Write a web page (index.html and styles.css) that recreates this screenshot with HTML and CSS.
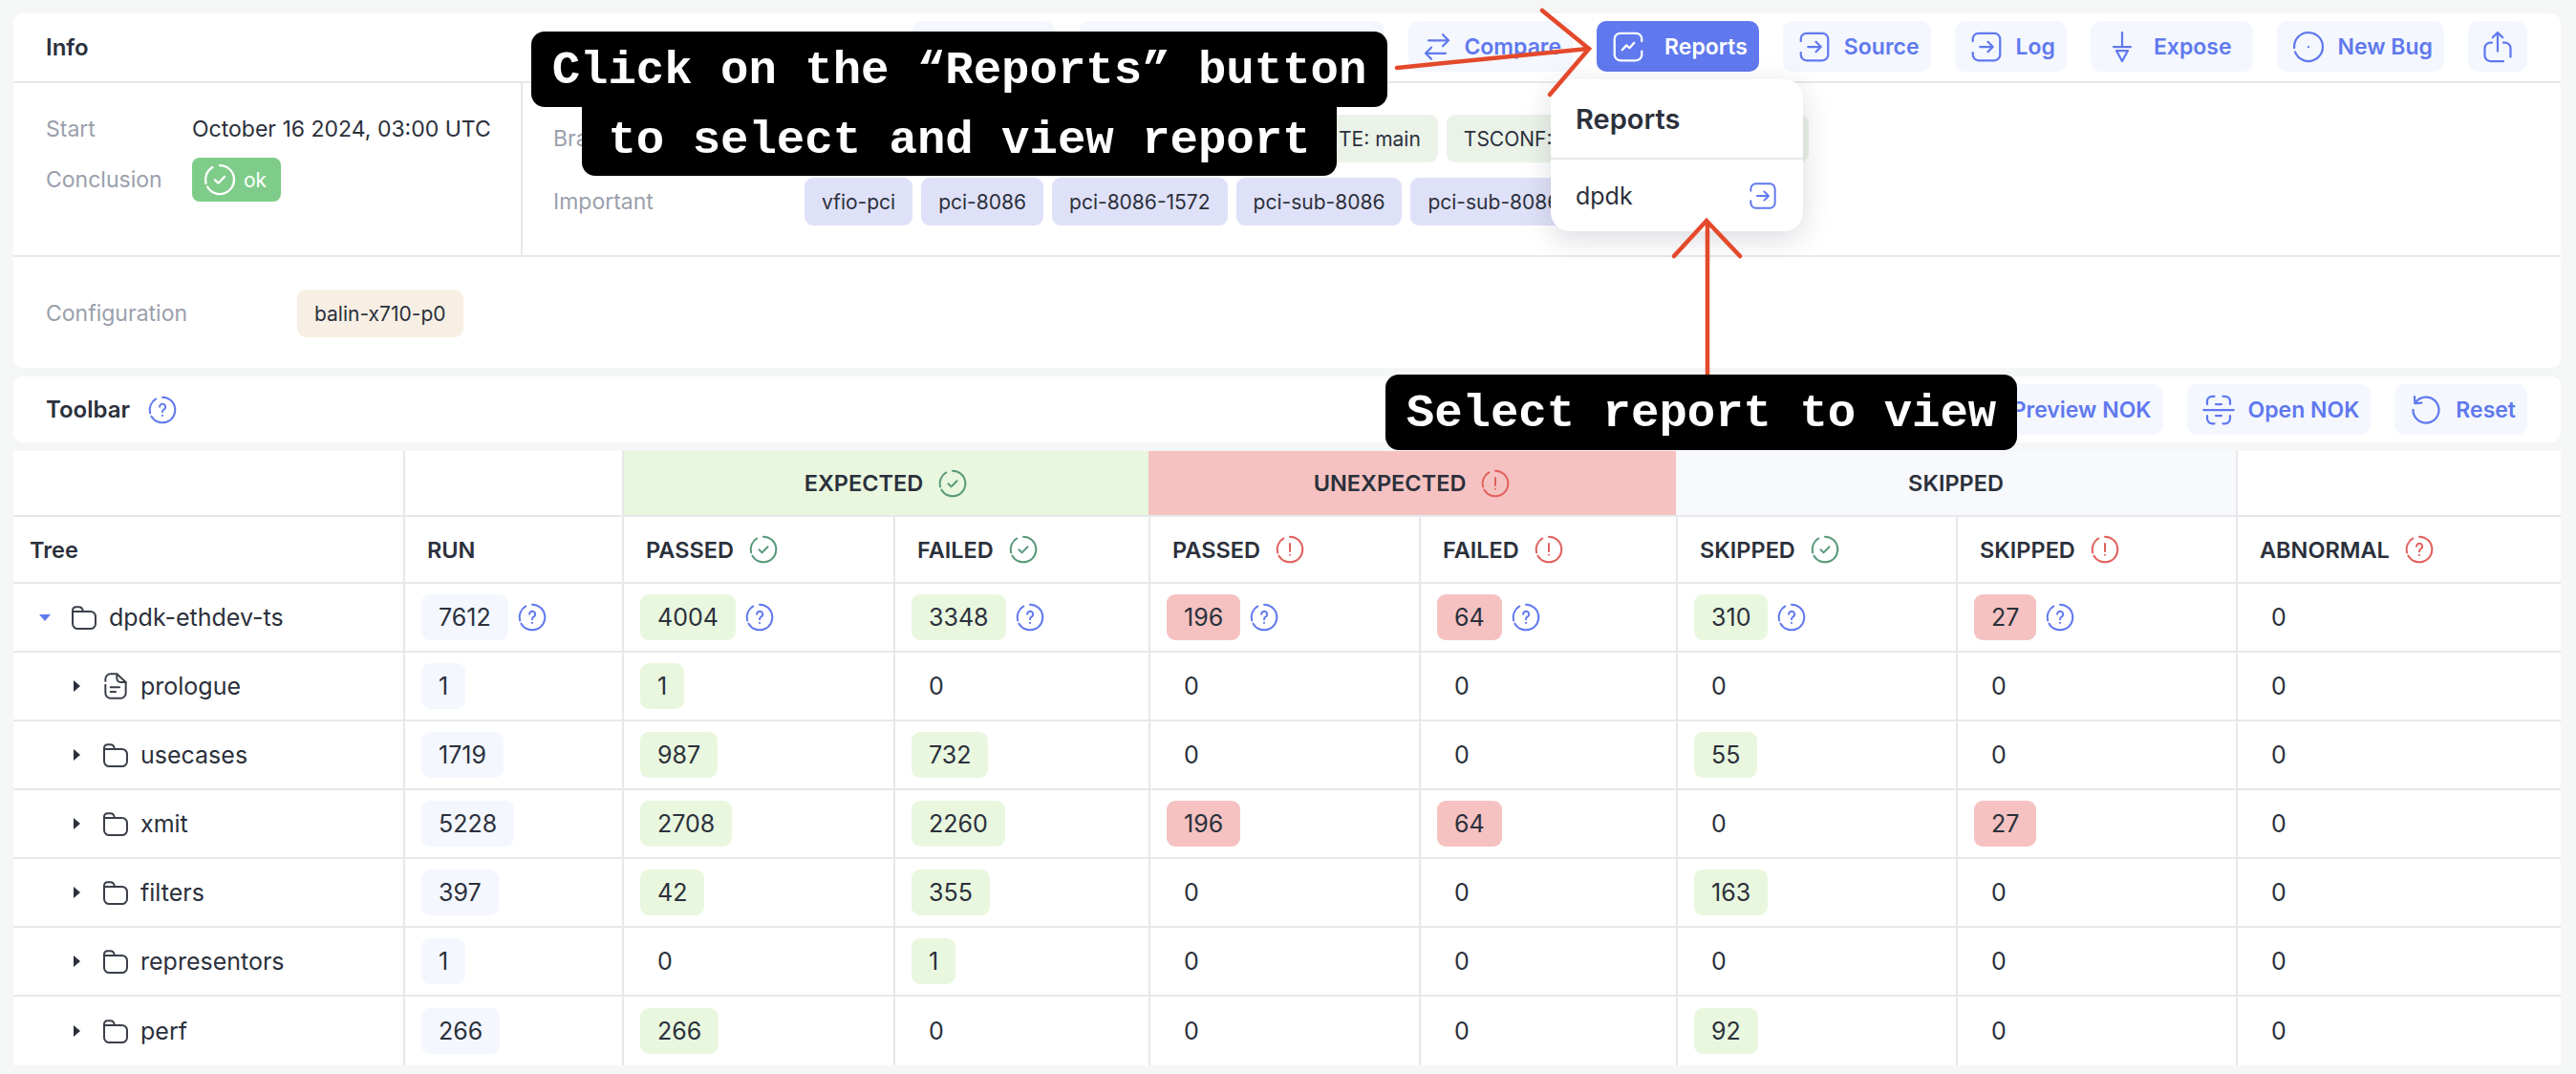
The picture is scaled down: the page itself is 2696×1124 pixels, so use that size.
FILE: index.html
```html
<!DOCTYPE html>
<html lang="en">
<head>
  <meta charset="UTF-8">
  <title>Run report</title>
  <link rel="stylesheet" href="styles.css">
</head>
<body>

  <svg class="sprites" width="0" height="0">
    <symbol id="i-help" viewBox="0 0 24 24"><path d="M12 2a10 10 0 1 1-8.66 15M2.34 14.59A10 10 0 0 1 7 3.34"/><path d="M9.8 9.6a2.3 2.3 0 1 1 3.5 2c-.9.5-1.3 1-1.3 2M12 16.4v.1"/></symbol>
    <symbol id="i-check" viewBox="0 0 24 24"><path d="M12 2a10 10 0 1 1-8.66 15M2.34 14.59A10 10 0 0 1 7 3.34"/><path d="M8.6 12.2l2.3 2.3 4.5-4.6"/></symbol>
    <symbol id="i-alert" viewBox="0 0 24 24"><path d="M12 2a10 10 0 1 1-8.66 15M2.34 14.59A10 10 0 0 1 7 3.34"/><path d="M12 7.5v6M12 16.3v.1"/></symbol>
    <symbol id="i-folder" viewBox="0 0 24 24"><path d="M3 7.5V17a4 4 0 0 0 4 4h10a4 4 0 0 0 4-4v-5.500a4 4 0 0 0-4-4H3zM3 7.500V6.500a2.500 2.500 0 0 1 2.500-2.500h2.500a3 3 0 0 1 2.800 2l.5 1.500"/></symbol>
    <symbol id="i-file" viewBox="0 0 24 24"><path d="M4 8V6.500a4 4 0 0 1 4-4h5l7 6.500v8.500a4 4 0 0 1-4 4H8a4 4 0 0 1-4-4V11"/><path d="M13 3v3a3 3 0 0 0 3 3h4M8 13h7M8 16.500h4"/></symbol>
    <symbol id="i-enter" viewBox="0 0 24 24"><path d="M2.500 8V6.500a4 4 0 0 1 4-4h11a4 4 0 0 1 4 4v11a4 4 0 0 1-4 4h-11a4 4 0 0 1-4-4V16"/><path d="M7.500 12h9M13 8.500l3.500 3.500-3.500 3.500"/></symbol>
    <symbol id="i-report" viewBox="0 0 24 24"><path d="M21.500 15v2.500a4 4 0 0 1-4 4h-11a4 4 0 0 1-4-4v-11a4 4 0 0 1 4-4h11a4 4 0 0 1 4 4V8"/><path d="M7.800 14.200l2.900-3.200 2.300 1.800 3.200-3.600"/></symbol>
    <symbol id="i-compare" viewBox="0 0 24 24"><path d="M20 7.500H6M16 3.500l4 4-4 4M4 16.500h14M8 12.500l-4 4 4 4"/></symbol>
    <symbol id="i-expose" viewBox="0 0 24 24"><path d="M12 2v10M6 12h12M8 14.700h8L12 22z"/></symbol>
    <symbol id="i-bug" viewBox="0 0 24 24"><path d="M12 2a10 10 0 1 1-9.330 13.600M2.100 12.800A10 10 0 0 1 12 2"/><path d="M12 12v.1" stroke-width="3"/></symbol>
    <symbol id="i-share" viewBox="0 0 24 24"><path d="M8 9H7a4 4 0 0 0-4 4v5a4 4 0 0 0 4 4h9M21 19v-6a4 4 0 0 0-4-4h-1M12 15V2M8.500 5.500L12 2l3.500 3.500"/></symbol>
    <symbol id="i-scan" viewBox="0 0 24 24"><path d="M4 8V6a3.500 3.500 0 0 1 3.500-3.500H9M15 2.500h1.500A3.500 3.500 0 0 1 20 6v2M1.500 12h21M4 16v2a3.500 3.500 0 0 0 3.500 3.500H9M15 21.500h1.500A3.500 3.500 0 0 0 20 18v-2M10 8h4M10 16h4"/></symbol>
    <symbol id="i-reset" viewBox="0 0 24 24"><path d="M4.300 7.400A9 9 0 1 1 3 12M4 2.800l.3 4.600 4.600-.3"/></symbol>
  </svg>

  <div class="page">

    <section class="card info">
      <header class="card-head">
        <h2 class="card-title">Info</h2>
        <div class="actions">
          <span class="btn btn-blank-a"></span>
          <span class="btn btn-blank-b"></span>
          <a class="btn btn-compare"><svg class="icon-btn"><use href="#i-compare"/></svg>Compare</a>
          <a class="btn btn-active"><svg class="icon-btn"><use href="#i-report"/></svg>Reports</a>
          <a class="btn"><svg class="icon-btn"><use href="#i-enter"/></svg>Source</a>
          <a class="btn"><svg class="icon-btn"><use href="#i-enter"/></svg>Log</a>
          <a class="btn btn-expose"><svg class="icon-btn"><use href="#i-expose"/></svg>Expose</a>
          <a class="btn"><svg class="icon-btn"><use href="#i-bug"/></svg>New Bug</a>
          <a class="btn btn-icon"><svg class="icon-btn"><use href="#i-share"/></svg></a>
        </div>
      </header>

      <div class="info-main">
        <div class="info-left">
          <span class="label">Start</span>
          <span class="value">October 16 2024, 03:00 UTC</span>
          <span class="label">Conclusion</span>
          <span class="badge-ok"><svg class="icon-ok"><use href="#i-check"/></svg>ok</span>
        </div>
        <div class="info-right">
          <span class="label">Branches</span>
          <div class="tags">
            <span class="tag tag-branch tag-first">TE: main</span>
            <span class="tag tag-branch tag-long">TSCONF: main</span>
          </div>
          <span class="label">Important</span>
          <div class="tags">
            <span class="tag tag-important">vfio-pci</span>
            <span class="tag tag-important">pci-8086</span>
            <span class="tag tag-important">pci-8086-1572</span>
            <span class="tag tag-important">pci-sub-8086</span>
            <span class="tag tag-important">pci-sub-8086</span>
          </div>
        </div>
      </div>

      <div class="info-config">
        <span class="label">Configuration</span>
        <span class="tag tag-config">balin-x710-p0</span>
      </div>
    </section>

    <section class="card toolbar">
      <div class="toolbar-name">
        <h2 class="card-title">Toolbar</h2>
        <svg class="icon-help"><use href="#i-help"/></svg>
      </div>
      <div class="actions">
        <a class="btn">Preview NOK</a>
        <a class="btn"><svg class="icon-btn"><use href="#i-scan"/></svg>Open NOK</a>
        <a class="btn"><svg class="icon-btn"><use href="#i-reset"/></svg>Reset</a>
      </div>
    </section>

    <table class="stats">
      <colgroup>
        <col class="c-tree"><col class="c-run"><col class="c-ep"><col class="c-ef"><col class="c-up"><col class="c-uf"><col class="c-s"><col class="c-s"><col class="c-ab">
      </colgroup>
      <thead>
        <tr class="row-group">
          <th></th>
          <th></th>
          <th colspan="2" class="g-expected"><span class="group">EXPECTED <svg class="icon-ok-s"><use href="#i-check"/></svg></span></th>
          <th colspan="2" class="g-unexpected"><span class="group">UNEXPECTED <svg class="icon-bad"><use href="#i-alert"/></svg></span></th>
          <th colspan="2" class="g-skipped"><span class="group">SKIPPED</span></th>
          <th></th>
        </tr>
        <tr class="row-head">
          <th class="th-tree">Tree</th>
          <th>RUN</th>
          <th><span class="head">PASSED <svg class="icon-ok-s"><use href="#i-check"/></svg></span></th>
          <th><span class="head">FAILED <svg class="icon-ok-s"><use href="#i-check"/></svg></span></th>
          <th><span class="head">PASSED <svg class="icon-bad"><use href="#i-alert"/></svg></span></th>
          <th><span class="head">FAILED <svg class="icon-bad"><use href="#i-alert"/></svg></span></th>
          <th><span class="head">SKIPPED <svg class="icon-ok-s"><use href="#i-check"/></svg></span></th>
          <th><span class="head">SKIPPED <svg class="icon-bad"><use href="#i-alert"/></svg></span></th>
          <th><span class="head">ABNORMAL <svg class="icon-bad"><use href="#i-help"/></svg></span></th>
        </tr>
      </thead>
      <tbody>
        <tr>
          <td><div class="node node-root"><i class="twist-open"></i><svg class="icon-node"><use href="#i-folder"/></svg>dpdk-ethdev-ts</div></td>
          <td><div class="cell"><span class="chip chip-run">7612</span><svg class="icon-help"><use href="#i-help"/></svg></div></td>
          <td><div class="cell"><span class="chip chip-ok">4004</span><svg class="icon-help"><use href="#i-help"/></svg></div></td>
          <td><div class="cell"><span class="chip chip-ok">3348</span><svg class="icon-help"><use href="#i-help"/></svg></div></td>
          <td><div class="cell"><span class="chip chip-bad">196</span><svg class="icon-help"><use href="#i-help"/></svg></div></td>
          <td><div class="cell"><span class="chip chip-bad">64</span><svg class="icon-help"><use href="#i-help"/></svg></div></td>
          <td><div class="cell"><span class="chip chip-ok">310</span><svg class="icon-help"><use href="#i-help"/></svg></div></td>
          <td><div class="cell"><span class="chip chip-bad">27</span><svg class="icon-help"><use href="#i-help"/></svg></div></td>
          <td><span class="chip">0</span></td>
        </tr>
        <tr>
          <td><div class="node"><i class="twist"></i><svg class="icon-node"><use href="#i-file"/></svg>prologue</div></td>
          <td><span class="chip chip-run">1</span></td>
          <td><span class="chip chip-ok">1</span></td>
          <td><span class="chip">0</span></td>
          <td><span class="chip">0</span></td>
          <td><span class="chip">0</span></td>
          <td><span class="chip">0</span></td>
          <td><span class="chip">0</span></td>
          <td><span class="chip">0</span></td>
        </tr>
        <tr>
          <td><div class="node"><i class="twist"></i><svg class="icon-node"><use href="#i-folder"/></svg>usecases</div></td>
          <td><span class="chip chip-run">1719</span></td>
          <td><span class="chip chip-ok">987</span></td>
          <td><span class="chip chip-ok">732</span></td>
          <td><span class="chip">0</span></td>
          <td><span class="chip">0</span></td>
          <td><span class="chip chip-ok">55</span></td>
          <td><span class="chip">0</span></td>
          <td><span class="chip">0</span></td>
        </tr>
        <tr>
          <td><div class="node"><i class="twist"></i><svg class="icon-node"><use href="#i-folder"/></svg>xmit</div></td>
          <td><span class="chip chip-run">5228</span></td>
          <td><span class="chip chip-ok">2708</span></td>
          <td><span class="chip chip-ok">2260</span></td>
          <td><span class="chip chip-bad">196</span></td>
          <td><span class="chip chip-bad">64</span></td>
          <td><span class="chip">0</span></td>
          <td><span class="chip chip-bad">27</span></td>
          <td><span class="chip">0</span></td>
        </tr>
        <tr>
          <td><div class="node"><i class="twist"></i><svg class="icon-node"><use href="#i-folder"/></svg>filters</div></td>
          <td><span class="chip chip-run">397</span></td>
          <td><span class="chip chip-ok">42</span></td>
          <td><span class="chip chip-ok">355</span></td>
          <td><span class="chip">0</span></td>
          <td><span class="chip">0</span></td>
          <td><span class="chip chip-ok">163</span></td>
          <td><span class="chip">0</span></td>
          <td><span class="chip">0</span></td>
        </tr>
        <tr>
          <td><div class="node"><i class="twist"></i><svg class="icon-node"><use href="#i-folder"/></svg>representors</div></td>
          <td><span class="chip chip-run">1</span></td>
          <td><span class="chip">0</span></td>
          <td><span class="chip chip-ok">1</span></td>
          <td><span class="chip">0</span></td>
          <td><span class="chip">0</span></td>
          <td><span class="chip">0</span></td>
          <td><span class="chip">0</span></td>
          <td><span class="chip">0</span></td>
        </tr>
        <tr class="row-last">
          <td><div class="node"><i class="twist"></i><svg class="icon-node"><use href="#i-folder"/></svg>perf</div></td>
          <td><span class="chip chip-run">266</span></td>
          <td><span class="chip chip-ok">266</span></td>
          <td><span class="chip">0</span></td>
          <td><span class="chip">0</span></td>
          <td><span class="chip">0</span></td>
          <td><span class="chip chip-ok">92</span></td>
          <td><span class="chip">0</span></td>
          <td><span class="chip">0</span></td>
        </tr>
      </tbody>
    </table>

    <!-- dropdown opened from the Reports button -->
    <div class="menu">
      <div class="menu-title">Reports</div>
      <div class="menu-item">dpdk<svg class="icon-menu"><use href="#i-enter"/></svg></div>
    </div>

    <!-- annotations drawn on top of the screenshot -->
    <svg class="arrows" width="2696" height="1124">
      <path d="M1462 71L1662 51M1614 11l49 40-41 48"/>
      <path d="M1787 396V234M1752 268l34-37 35 37"/>
    </svg>
    <div class="note note-reports">
      <span class="note-line">Click on the “Reports” button</span>
      <span class="note-line note-line-2">to select and view report</span>
    </div>
    <div class="note note-select">
      <span class="note-line">Select report to view</span>
    </div>

  </div>

</body>
</html>
```

FILE: styles.css
```css
* {
  box-sizing: border-box;
}

body {
  margin: 0;
  background-color: #f5f6f6;
  color: #2b303b;
  font-family: Inter, "Noto Sans", sans-serif;
  font-size: 23px;
}

.sprites {
  position: absolute;
}

symbol path {
  fill: none;
  stroke: currentColor;
  stroke-width: 1.5;
  stroke-linecap: round;
  stroke-linejoin: round;
}

.page {
  position: relative;
  width: 2696px;
  height: 1124px;
  padding: 14px 16px 0 14px;
  overflow: hidden;
}

.card {
  background-color: #fff;
  border-radius: 10px;
}

.card-title {
  margin: 0;
  font-size: 24px;
  font-weight: 600;
}

/* info card */
.info {
  height: 371px;
}

.card-head {
  display: flex;
  justify-content: space-between;
  height: 73px;
  padding: 8px 35px 0 34px;
  border-bottom: 2px solid #e6e8eb;
}

.card-head .card-title {
  line-height: 56px;
}

.actions {
  display: flex;
  gap: 25px;
}

.btn {
  display: flex;
  align-items: center;
  gap: 13px;
  height: 53px;
  padding: 0 12px 0 15px;
  border-radius: 10px;
  background-color: #f4f7fe;
  color: #6079ee;
  font-weight: 600;
}

.btn-active {
  gap: 20px;
  background-color: #6079ee;
  color: #fff;
}

.btn-compare {
  gap: 10px;
  padding-left: 12px;
}

.btn-expose {
  gap: 15px;
  padding-right: 22px;
}

.btn-icon {
  padding: 0 13px;
}

.btn-blank-a {
  width: 150px;
}

.btn-blank-b {
  width: 320px;
}

.icon-btn {
  width: 36px;
  height: 36px;
}

.info-main {
  display: flex;
  height: 182px;
  border-bottom: 2px solid #e6e8eb;
}

.info-left {
  display: grid;
  grid-template-columns: 153px auto;
  grid-auto-rows: min-content;
  align-items: center;
  row-gap: 12px;
  width: 533px;
  padding: 30px 0 0 34px;
  border-right: 2px solid #e6e8eb;
}

.info-right {
  display: grid;
  grid-template-columns: 263px auto;
  grid-auto-rows: min-content;
  align-items: center;
  row-gap: 16px;
  padding: 33px 0 0 32px;
}

.label {
  color: #9aa0ac;
}

.value {
  line-height: 36px;
}

.badge-ok {
  display: inline-flex;
  align-items: center;
  gap: 7px;
  width: 93px;
  height: 46px;
  padding-left: 11px;
  border-radius: 8px;
  background-color: #7fcc8a;
  color: #fff;
  font-size: 21px;
}

.icon-ok {
  width: 36px;
  height: 36px;
}

.tags {
  display: flex;
  gap: 9px;
}

.tag {
  display: inline-flex;
  align-items: center;
  height: 50px;
  padding: 0 18px;
  border-radius: 9px;
  font-size: 21px;
  white-space: nowrap;
}

.tag-branch {
  background-color: #ebf3e9;
}

.tag-first {
  margin-left: 541px;
}

.tag-long {
  width: 379px;
}

.tag-important {
  background-color: #dfe1f8;
}

.tag-config {
  background-color: #f8efe4;
}

.info-config {
  display: grid;
  grid-template-columns: 263px 174px;
  align-items: center;
  padding: 34px 0 0 34px;
}

/* toolbar */
.toolbar {
  display: flex;
  justify-content: space-between;
  height: 69px;
  margin-top: 9px;
  padding: 8px 35px 0 34px;
}

.toolbar-name {
  display: flex;
  align-items: center;
  gap: 18px;
  height: 53px;
}

.icon-help {
  width: 32px;
  height: 32px;
  color: #6079ee;
}

/* table */
.stats {
  width: 2666px;
  margin-top: 9px;
  border-collapse: separate;
  border-spacing: 0;
  table-layout: fixed;
  background-color: #fff;
  font-size: 25px;
}

.c-tree { width: 408px; }
.c-run { width: 229px; }
.c-ep { width: 284px; }
.c-ef { width: 267px; }
.c-up { width: 283px; }
.c-uf { width: 269px; }
.c-s { width: 293px; }
.c-ab { width: 340px; }

.stats th,
.stats td {
  padding: 0 0 0 17px;
  border-bottom: 2px solid #e6e8eb;
  border-left: 2px solid #e6e8eb;
  text-align: left;
}

.stats th {
  padding-left: 23px;
  font-size: 23.500px;
  font-weight: 600;
}

.stats th:first-child,
.stats td:first-child {
  border-left: none;
}

.row-group th {
  height: 69px;
}

.row-head th {
  height: 70px;
}

.stats .th-tree {
  padding-left: 17px;
}

.stats tbody tr {
  height: 72px;
}

.stats .row-last td {
  height: 70px;
  border-bottom: none;
}

.stats .g-expected,
.stats .g-unexpected,
.stats .g-skipped {
  padding: 0;
  text-align: center;
}

.stats .g-expected {
  background-color: #e9f7df;
}

.stats .g-unexpected {
  border-left: none;
  background-color: #f5c2c1;
}

.stats .g-skipped {
  border-left: none;
  background-color: #f7f9fc;
}

.group,
.head {
  display: inline-flex;
  align-items: center;
  gap: 15px;
}

.icon-ok-s {
  width: 32px;
  height: 32px;
  color: #57997a;
}

.icon-bad {
  width: 32px;
  height: 32px;
  color: #e0605c;
}

.cell {
  display: flex;
  align-items: center;
  gap: 9px;
}

.chip {
  display: inline-flex;
  align-items: center;
  height: 48px;
  padding: 0 18px;
  border-radius: 9px;
}

.chip-run {
  background-color: #f4f7fe;
}

.chip-ok {
  background-color: #e9f7df;
}

.chip-bad {
  background-color: #f5c2c1;
}

.node {
  display: flex;
  align-items: center;
  gap: 10px;
  padding-left: 43px;
}

.node-root {
  padding-left: 10px;
}

.twist,
.twist-open {
  width: 0;
  height: 0;
  margin-right: 9px;
}

.twist {
  margin-left: 3px;
  border-top: 6px solid transparent;
  border-bottom: 6px solid transparent;
  border-left: 7px solid #2b303b;
}

.twist + .icon-node {
  margin-left: 2px;
}

.twist-open {
  border-right: 6px solid transparent;
  border-left: 6px solid transparent;
  border-top: 7px solid #6079ee;
}

.icon-node {
  width: 32px;
  height: 32px;
  color: #3a3f4a;
}

/* reports dropdown */
.menu {
  position: absolute;
  top: 83px;
  left: 1623px;
  width: 264px;
  height: 159px;
  border-radius: 20px;
  background-color: #fff;
  box-shadow: 0 8px 30px rgba(30, 40, 60, 0.16);
}

.menu-title {
  height: 84px;
  padding: 24px 0 0 26px;
  border-bottom: 2px solid #e6e8eb;
  font-size: 29px;
  font-weight: 600;
}

.menu-item {
  display: flex;
  align-items: center;
  justify-content: space-between;
  height: 75px;
  padding: 0 26px 0 26px;
  font-size: 25px;
}

.icon-menu {
  width: 32px;
  height: 32px;
  color: #6079ee;
}

/* annotations */
.arrows {
  position: absolute;
  top: 0;
  left: 0;
}

.arrows path {
  fill: none;
  stroke: #e4492c;
  stroke-width: 4.500;
  stroke-linecap: round;
}

.note {
  position: absolute;
  display: flex;
  flex-direction: column;
  align-items: center;
  color: #fff;
  font-family: "Liberation Mono", monospace;
  font-size: 49px;
  font-weight: 700;
}

.note-line {
  height: 79px;
  padding: 0 22px;
  border-radius: 14px;
  background-color: #000;
  line-height: 83px;
  white-space: pre;
}

.note-line-2 {
  height: 72px;
  padding: 0 27px;
  border-radius: 0 0 14px 14px;
  line-height: 71px;
}

.note-reports {
  top: 33px;
  left: 556px;
  width: 896px;
}

.note-select {
  top: 392px;
  left: 1450px;
  width: 661px;
}
```
